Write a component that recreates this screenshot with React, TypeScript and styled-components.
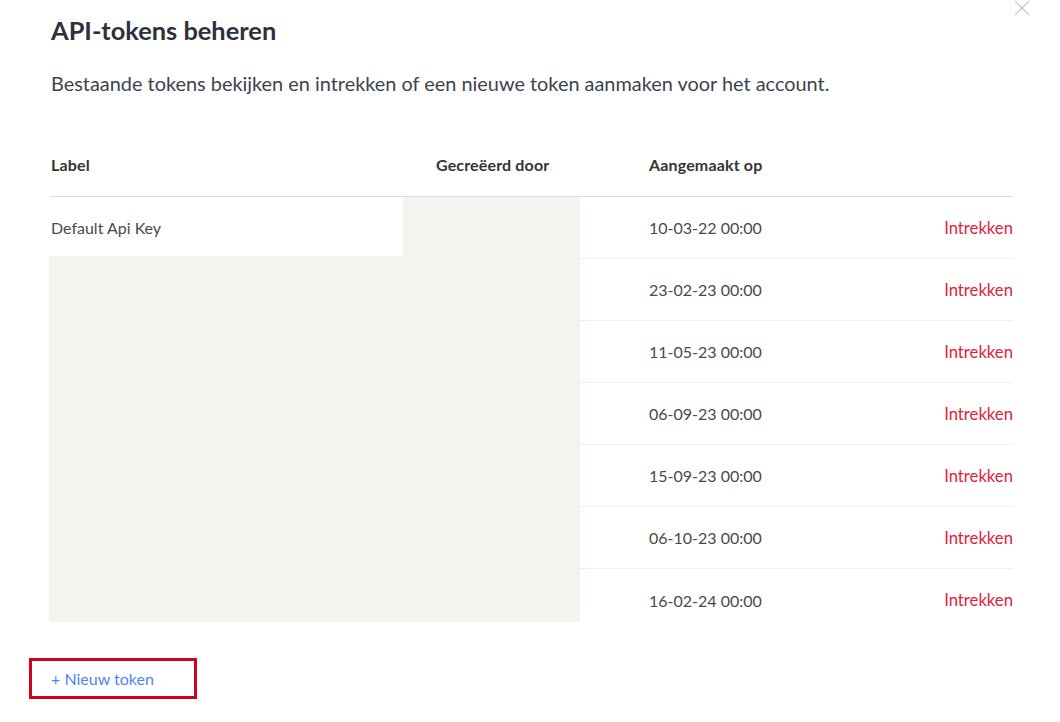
import React from 'react';
import styled, { createGlobalStyle } from 'styled-components';

interface IToken {
	label: string;
	createdAt: string;
}

const tokens: IToken[] = [
	{ label: 'Default Api Key', createdAt: '10-03-22 00:00' },
	{ label: '', createdAt: '23-02-23 00:00' },
	{ label: '', createdAt: '11-05-23 00:00' },
	{ label: '', createdAt: '06-09-23 00:00' },
	{ label: '', createdAt: '15-09-23 00:00' },
	{ label: '', createdAt: '06-10-23 00:00' },
	{ label: '', createdAt: '16-02-24 00:00' },
];

const GlobalStyle = createGlobalStyle`
	html, body {
		margin: 0;
		background: #ffffff;
		font-family: Lato, 'Open Sans', 'Liberation Sans', sans-serif;
		-webkit-font-smoothing: antialiased;
	}
`;

const Modal = styled.div`
	position: relative;
	box-sizing: border-box;
	width: 1060px;
	padding: 15px 47px 0 50px;
`;

const CloseButton = styled.button`
	position: absolute;
	top: 0;
	right: 30px;
	width: 16px;
	height: 16px;
	padding: 0;
	border: none;
	background: none;
	cursor: pointer;
	display: flex;
`;

const Title = styled.h2`
	margin: 0 0 0 1px;
	font-size: 25.4px;
	line-height: 31px;
	font-weight: 700;
	color: #2c313c;
`;

const Description = styled.p`
	margin: 23px 0 0 1px;
	font-size: 19.9px;
	line-height: 28px;
	color: #3e434f;
`;

const Table = styled.div`
	margin-top: 37px;
	width: 963px;
`;

const Row = styled.div<{ $head?: boolean }>`
	display: grid;
	grid-template-columns: 385px 213px 1fr auto;
	align-items: center;
	height: ${(p) => (p.$head ? 63 : 62)}px;
	box-sizing: border-box;
	border-bottom: 1px solid ${(p) => (p.$head ? '#d9dbe0' : '#eeeeee')};
	font-size: 16px;
	font-weight: ${(p) => (p.$head ? 700 : 400)};
	color: ${(p) => (p.$head ? '#343434' : '#4a4a4a')};
	padding: 0 0 ${(p) => (p.$head ? 1 : 0)}px 1px;

	&:last-child {
		border-bottom: none;
	}
`;

const HeadLabel = styled.span`
	letter-spacing: 0.15px;
`;

const Body = styled.div`
	position: relative;
`;

const Redaction = styled.div<{ $left: number; $top: number; $width: number; $height: number }>`
	position: absolute;
	left: ${(p) => p.$left}px;
	top: ${(p) => p.$top}px;
	width: ${(p) => p.$width}px;
	height: ${(p) => p.$height}px;
	background: #f4f3ef;
`;

const RevokeLink = styled.a`
	font-size: 16.7px;
	color: #e0233b;
	text-decoration: none;
	cursor: pointer;
`;

const Footer = styled.div`
	margin: 27px 0 0 -21px;
	box-sizing: border-box;
	width: 168px;
	height: 41px;
	border: 3px solid #d0021b;
	display: flex;
	align-items: center;
	padding-left: 19px;
`;

const NewTokenLink = styled.a`
	font-size: 16px;
	color: #4a86f5;
	text-decoration: none;
	cursor: pointer;
`;

export default function App() {
	return (
		<>
			<GlobalStyle />
			<Modal>
				<CloseButton aria-label="Sluiten">
					<svg width="16" height="16" viewBox="0 0 16 16">
						<path d="M1 1 L15 15 M15 1 L1 15" stroke="#c9c9c9" strokeWidth="1.3" fill="none" />
					</svg>
				</CloseButton>
				<Title>API-tokens beheren</Title>
				<Description>
					Bestaande tokens bekijken en intrekken of een nieuwe token aanmaken voor het account.
				</Description>
				<Table>
					<Row $head>
						<HeadLabel>Label</HeadLabel>
						<HeadLabel>Gecreëerd door</HeadLabel>
						<HeadLabel>Aangemaakt op</HeadLabel>
						<span />
					</Row>
					<Body>
						<Redaction $left={353} $top={0} $width={177} $height={425} />
						<Redaction $left={-1} $top={59} $width={531} $height={366} />
						{tokens.map((token, i) => (
							<Row key={i}>
								<span>{token.label}</span>
								<span />
								<span>{token.createdAt}</span>
								<RevokeLink>Intrekken</RevokeLink>
							</Row>
						))}
					</Body>
				</Table>
				<Footer>
					<NewTokenLink>+ Nieuw token</NewTokenLink>
				</Footer>
			</Modal>
		</>
	);
}
